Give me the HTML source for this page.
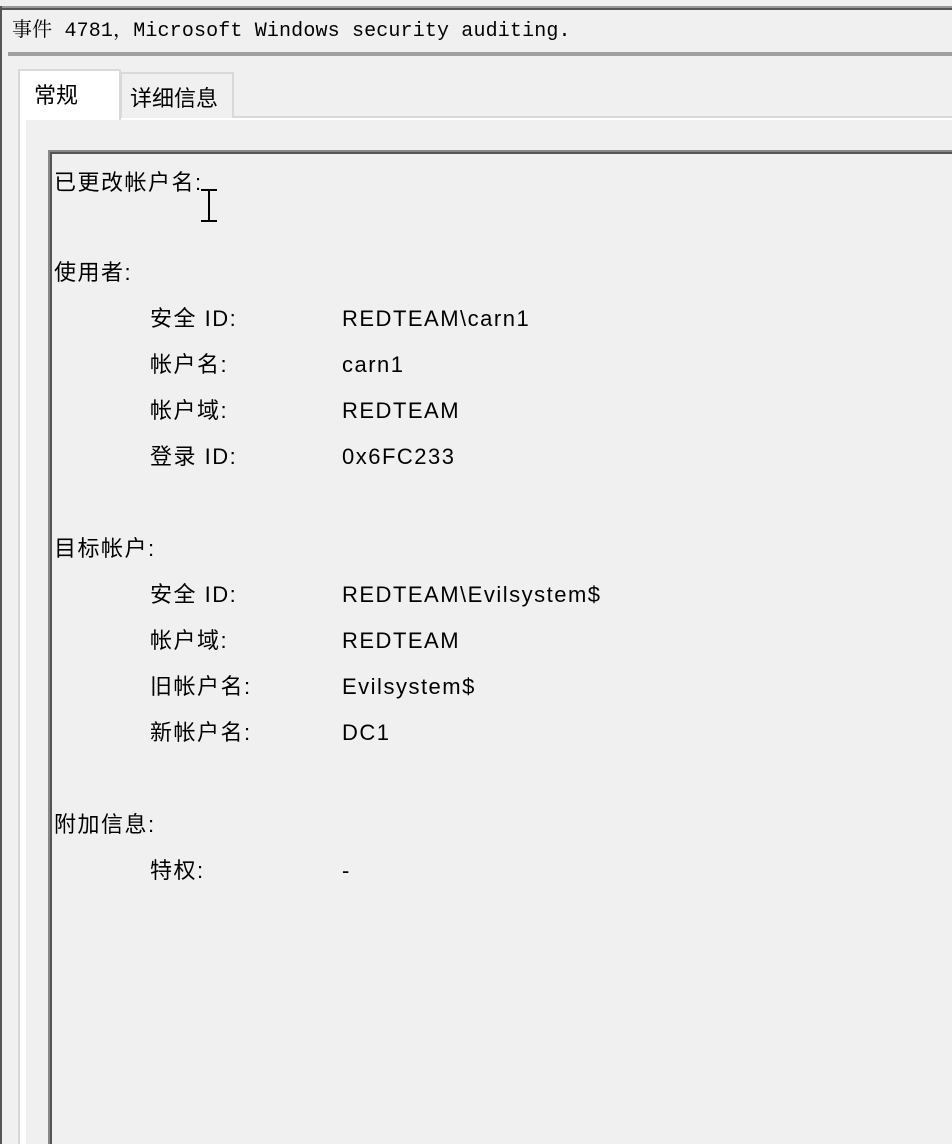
<!DOCTYPE html>
<html><head><meta charset="utf-8"><style>
*{margin:0;padding:0;box-sizing:border-box}
body{width:952px;height:1144px;background:#f0f0f0;position:relative;overflow:hidden;font-family:"Liberation Sans","Noto Sans CJK SC",sans-serif}
.a{position:absolute}
.t{position:absolute;font-size:22px;color:#000;line-height:30px;white-space:nowrap;letter-spacing:1.5px;margin-top:2px}
</style></head><body>
<div class="a" style="left:0;top:6px;width:952px;height:2px;background:#999"></div>
<div class="a" style="left:0;top:8px;width:952px;height:2px;background:#555"></div>
<div class="a" style="left:0;top:6px;width:2px;height:1138px;background:#555"></div>
<div class="a" style="left:12px;top:18px;font-family:'Liberation Mono','Noto Serif CJK SC',monospace;font-size:20px;line-height:28px;white-space:nowrap;letter-spacing:0.15px">事件 4781，Microsoft Windows security auditing.</div>
<div class="a" style="left:8px;top:52px;width:944px;height:4px;background:#a0a0a0"></div>
<div class="a" style="left:18px;top:116px;width:934px;height:2px;background:#d9d9d9"></div>
<div class="a" style="left:18px;top:116px;width:2px;height:1028px;background:#d9d9d9"></div>
<div class="a" style="left:20px;top:118px;width:6px;height:1026px;background:#fff"></div>
<div class="a" style="left:20px;top:118px;width:932px;height:2px;background:#fff"></div>
<div class="a" style="left:120px;top:72px;width:114px;height:46px;border:2px solid #d9d9d9;border-bottom:none;background:#f0f0f0"></div>
<div class="a" style="left:18px;top:69px;width:103px;height:51px;background:#fff;border:2px solid #d9d9d9;border-bottom:none"></div>
<div class="a" style="left:20px;top:118px;width:99px;height:2px;background:#fff"></div>
<div class="t" style="left:34px;top:77px;font-family:'Noto Sans CJK SC',sans-serif;letter-spacing:0">常规</div>
<div class="t" style="left:130px;top:80px;font-family:'Noto Sans CJK SC',sans-serif;letter-spacing:0">详细信息</div>
<div class="a" style="left:48px;top:150px;width:904px;height:994px;border-top:2px solid #888;border-left:2px solid #888"></div>
<div class="a" style="left:50px;top:152px;width:902px;height:992px;border-top:2px solid #555;border-left:2px solid #555"></div>
<div class="t" style="left:54px;top:166px">已更改帐户名:</div>
<div class="a" style="left:199px;top:189px;width:20px;height:34px">
<div class="a" style="left:9px;top:2px;width:2px;height:30px;background:#000"></div>
<div class="a" style="left:2px;top:0;width:16px;height:2px;background:#000"></div>
<div class="a" style="left:2px;top:31px;width:16px;height:2px;background:#000"></div></div>
<div class="t" style="left:54px;top:256px">使用者:</div>
<div class="t" style="left:150px;top:302px">安全 ID:</div><div class="t" style="left:342px;top:302px">REDTEAM\carn1</div>
<div class="t" style="left:150px;top:348px">帐户名:</div><div class="t" style="left:342px;top:348px">carn1</div>
<div class="t" style="left:150px;top:394px">帐户域:</div><div class="t" style="left:342px;top:394px">REDTEAM</div>
<div class="t" style="left:150px;top:440px">登录 ID:</div><div class="t" style="left:342px;top:440px">0x6FC233</div>
<div class="t" style="left:54px;top:532px">目标帐户:</div>
<div class="t" style="left:150px;top:578px">安全 ID:</div><div class="t" style="left:342px;top:578px">REDTEAM\Evilsystem$</div>
<div class="t" style="left:150px;top:624px">帐户域:</div><div class="t" style="left:342px;top:624px">REDTEAM</div>
<div class="t" style="left:150px;top:670px">旧帐户名:</div><div class="t" style="left:342px;top:670px">Evilsystem$</div>
<div class="t" style="left:150px;top:716px">新帐户名:</div><div class="t" style="left:342px;top:716px">DC1</div>
<div class="t" style="left:54px;top:808px">附加信息:</div>
<div class="t" style="left:150px;top:854px">特权:</div><div class="t" style="left:342px;top:854px">-</div>
</body></html>
